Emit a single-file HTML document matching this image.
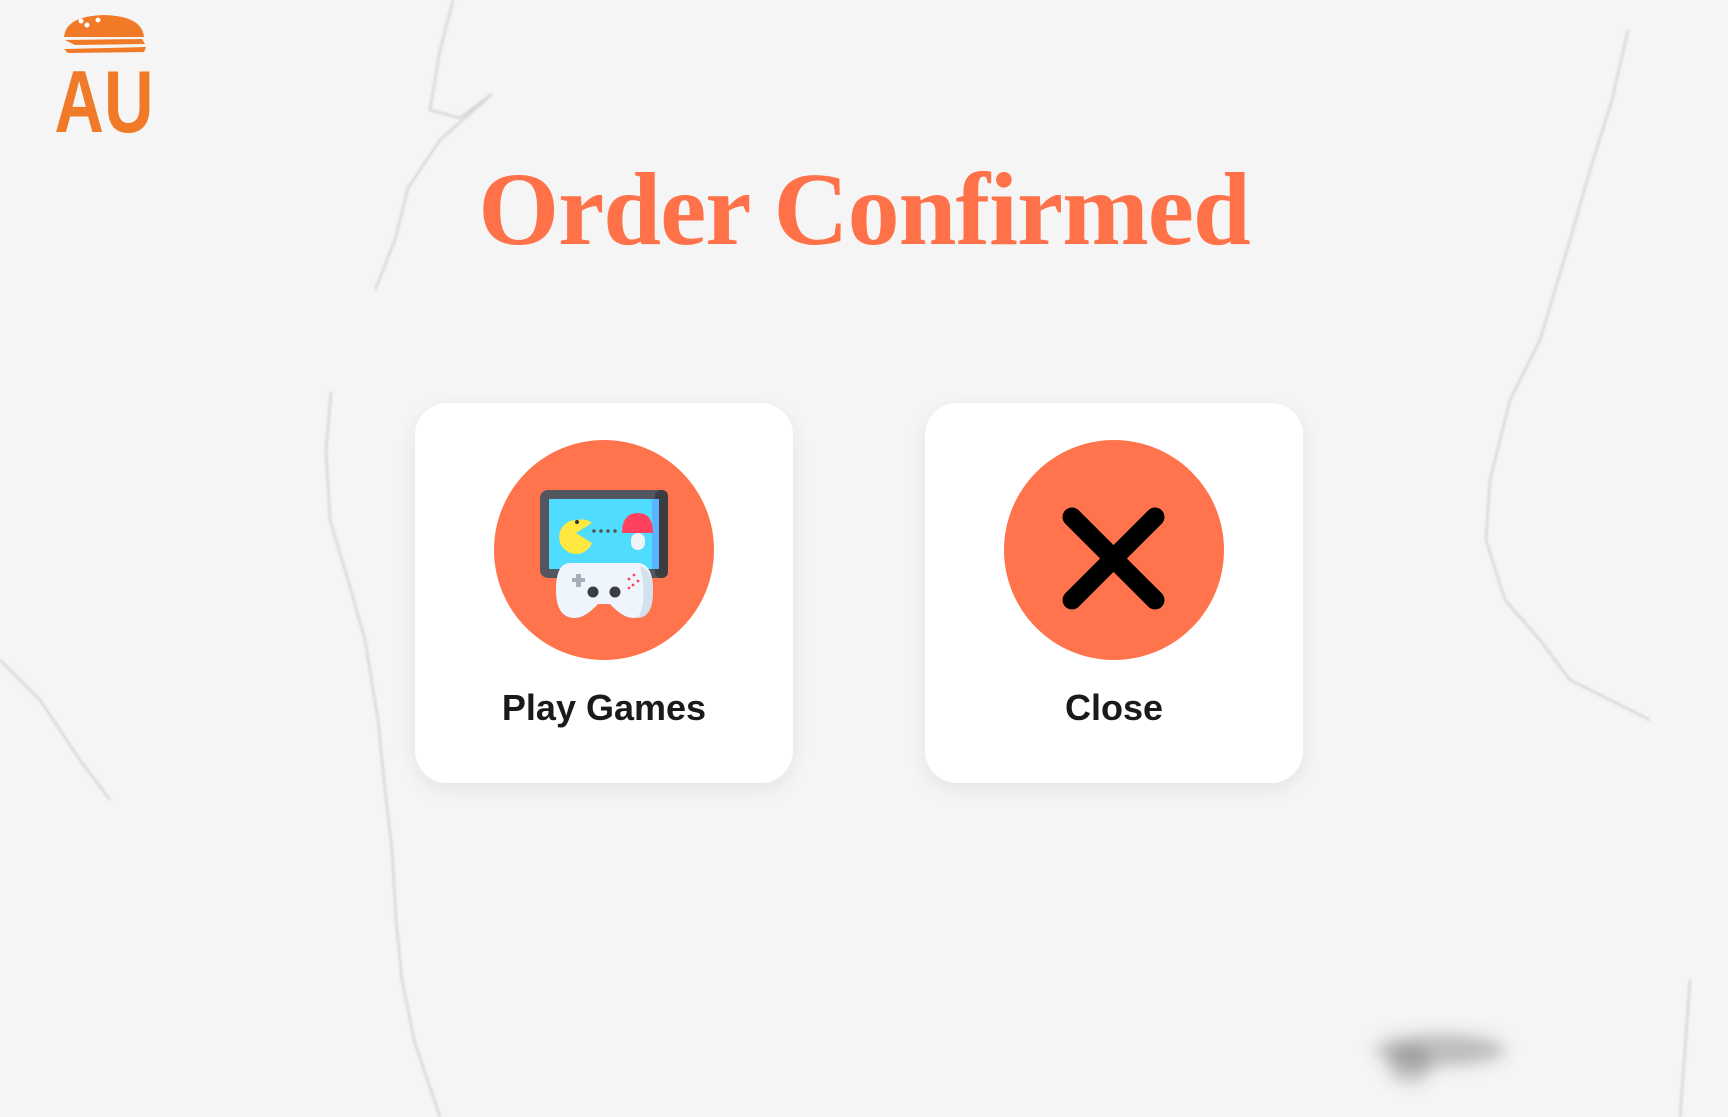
<!DOCTYPE html>
<html><head><meta charset="utf-8"><style>
html,body{margin:0;padding:0}
body{width:1728px;height:1117px;position:relative;overflow:hidden;background:#f4f5f4;font-family:"Liberation Sans",sans-serif}
.bg{position:absolute;left:0;top:0}
h1{position:absolute;left:0;width:1728px;top:150px;margin:0;text-align:center;font-family:"Liberation Serif",serif;font-weight:bold;font-size:104px;color:#ff7249;line-height:120px;letter-spacing:-1px}
.card{position:absolute;top:403px;width:378px;height:380px;background:#fff;border-radius:32px;box-shadow:0 6px 20px rgba(0,0,0,0.07)}
.circ{position:absolute;left:79px;top:37px;width:220px;height:220px;border-radius:50%;background:#ff744c}
.lbl{position:absolute;left:0;width:100%;top:284px;text-align:center;font-size:36px;font-weight:bold;color:#1a1a1a}
</style></head><body>
<svg class="bg" width="1728" height="1117" viewBox="0 0 1728 1117">
<defs><filter id="b"><feGaussianBlur stdDeviation="1.2"/></filter><filter id="b2" x="-100%" y="-200%" width="300%" height="500%"><feGaussianBlur stdDeviation="8"/></filter></defs>
<g fill="none" stroke="#7a7c7d" stroke-opacity=".3" stroke-width="2" filter="url(#b)">
<path d="M453 0 L440 50 L430 110 L460 118 L492 94 L440 140 L408 188 L395 240 L375 290"/>
<path d="M331 392 L326 450 L330 520 L348 580 L365 640 L378 720 L384 780 L392 850 L396 920 L402 980 L414 1040 L440 1117"/>
<path d="M1628 30 L1612 100 L1590 170 L1570 240 L1540 340 L1510 400 L1490 480 L1486 540 L1505 600 L1540 640 L1570 680 L1610 700 L1650 720"/>
<path d="M0 660 L40 700 L80 760 L110 800"/>
<path d="M1680 1117 L1685 1050 L1690 980"/>
</g>
<g filter="url(#b2)"><ellipse cx="1440" cy="1050" rx="65" ry="16" fill="#555" opacity=".35"/>
<ellipse cx="1410" cy="1065" rx="22" ry="18" fill="#444" opacity=".3"/></g>
</svg>
<svg style="position:absolute;left:50px;top:10px" width="110" height="130" viewBox="50 10 110 130">
<g fill="#f07a28">
<path d="M64 37 Q66 16 104 15 Q142 16 144 37 Z"/>
<path d="M65 40 L142 39 L145 44 L75 45 Z"/>
<path d="M64 49 L146 47 L144 52 L68 53 Z"/>
<text x="104" y="132" text-anchor="middle" font-family="Liberation Sans Narrow,Liberation Sans,sans-serif" font-weight="bold" font-size="88" transform="translate(104 0) scale(0.78 1) translate(-104 0)">AU</text>
</g>
<g fill="#fff"><circle cx="81" cy="21" r="2.5"/><circle cx="87" cy="25" r="2.5"/><circle cx="98" cy="20" r="2.5"/></g>
</svg>
<h1>Order Confirmed</h1>
<div class="card" style="left:415px">
<div class="circ"></div>
<svg style="position:absolute;left:0;top:0" width="378" height="380" viewBox="415 403 378 380">
<rect x="540" y="490" width="128" height="88" rx="8" fill="#53565e"/>
<rect x="655" y="490" width="13" height="88" rx="6" fill="#3b3d43"/>
<rect x="549" y="499" width="110" height="70" fill="#4fdcff"/>
<rect x="652" y="499" width="7" height="70" fill="#5ab4ff"/>
<path d="M577 520 A17 17 0 1 0 592 543 L576 533 L592 523 A17 17 0 0 0 577 520Z" fill="#ffe83f"/>
<circle cx="577" cy="522" r="2" fill="#333"/>
<g fill="#555"><circle cx="594" cy="531" r="1.8"/><circle cx="601" cy="531" r="1.8"/><circle cx="608" cy="531" r="1.8"/><circle cx="615" cy="531" r="1.8"/></g>
<path d="M622 533 Q622 513 638 513 Q653 513 653 533 Z" fill="#ff415f"/>
<rect x="631" y="533" width="14" height="17" rx="7" fill="#eef3f8"/>
<path d="M586 564 L608 564 L618 564 L625 564 L637 580 L572 580 Z" fill="#a5afb7"/>
<path d="M570 563 Q556 563 556 590 Q556 618 575 618 Q585 618 598 604 L610 604 Q623 618 633 618 Q653 618 653 590 Q653 563 637 563 Z" fill="#eef5fd"/>
<path d="M640 566 Q653 570 653 592 Q653 617 638 618 Q648 600 640 566Z" fill="#d4e1ed"/>
<rect x="572" y="578" width="13" height="4" fill="#a5afb7"/><rect x="576" y="574" width="5" height="13" fill="#a5afb7"/>
<circle cx="593" cy="592" r="5.5" fill="#3b3d43"/><circle cx="615" cy="592" r="5.5" fill="#3b3d43"/>
<g fill="#ff415f"><circle cx="629" cy="579" r="1.4"/><circle cx="634" cy="575" r="1.4"/><circle cx="638" cy="581" r="1.4"/><circle cx="633" cy="585" r="1.4"/><circle cx="629" cy="588" r="1.4"/></g>
</svg>
<div class="lbl">Play Games</div>
</div>
<div class="card" style="left:925px">
<div class="circ"></div>
<svg style="position:absolute;left:0;top:0" width="378" height="380" viewBox="925 403 378 380">
<path d="M1072 517 L1155 600 M1155 517 L1072 600" stroke="#000" stroke-width="19" stroke-linecap="round"/>
</svg>
<div class="lbl">Close</div>
</div>
</body></html>
